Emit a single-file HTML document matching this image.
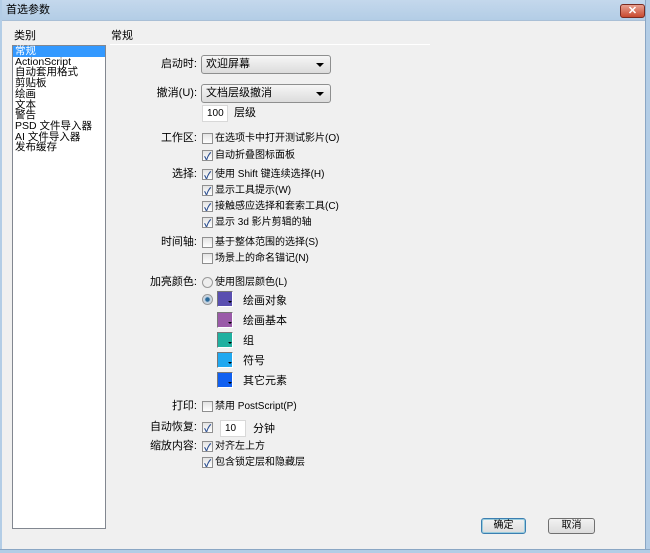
<!DOCTYPE html>
<html><head><meta charset="utf-8"><style>
*{margin:0;padding:0;box-sizing:border-box}
body{width:650px;height:553px;position:relative;overflow:hidden;background:#f0f0f0;font-family:"Liberation Sans","Noto Sans CJK SC",sans-serif;font-size:10px;color:#000}
.a{position:absolute;white-space:nowrap;line-height:13px}
.r{text-align:right;width:90px}
.title{position:absolute;left:0;top:0;width:650px;height:21px;background:linear-gradient(#c4d8ec,#b3cde6);border-bottom:1px solid #a9bfd6}
.rb{position:absolute;right:0;top:0;width:5px;height:553px;background:#b3cde6;border-left:1px solid #8aa6c4}
.bb{position:absolute;left:0;bottom:0;width:650px;height:4px;background:#b3cde6;border-top:1px solid #8aa6c4}
.lb{position:absolute;left:0;top:0;width:2px;height:553px;background:#b3cde6}
.close{position:absolute;left:620px;top:4px;width:25px;height:14px;border:1px solid #7a2b20;border-radius:3px;background:linear-gradient(#e8a090,#c84a30);color:#fff;font-size:11px;text-align:center;line-height:12px;font-weight:bold}
.list{position:absolute;left:12px;top:45px;width:94px;height:484px;background:#fff;border:1px solid #828790}
.list div{line-height:10.7px;padding-left:2px;font-size:10.5px}
.sel{background:#3399ff;color:#fff}
.dd{position:absolute;height:19px;border:1px solid #8e8f8f;border-radius:3px;background:linear-gradient(#f6f6f6,#dcdcdc);padding-left:4px;line-height:17px;font-size:11px}
.dd:after{content:"";position:absolute;right:6px;top:7px;border:4px solid transparent;border-top:4px solid #000;border-bottom:0}
.cb{position:absolute;width:11px;height:11px;border:1px solid #8f8f8f;background:linear-gradient(#e4e4e4,#fff)}
.cb.c:after{content:"✓";position:absolute;left:1px;top:-3px;font-size:10px;color:#2a4d8f;font-weight:bold}
.in{position:absolute;background:#fff;border:1px solid #d8d8d8;padding-left:4px;line-height:15px}
.sw{position:absolute;width:16px;height:16px;border:1px solid #777;border-right-color:#fff;border-bottom-color:#fff}
.sw:before{content:"";position:absolute;right:0;bottom:1px;border:2px solid transparent;border-top:2px solid #000;z-index:1}
.rad{position:absolute;width:11px;height:11px;border-radius:50%;border:1px solid #999;background:#eee}
.btn{position:absolute;height:16px;border:1px solid #707070;border-radius:3px;background:linear-gradient(#f2f2f2,#dcdcdc);text-align:center;line-height:14px}
</style></head><body>
<div class="title"></div>
<div class="a" style="left:6px;top:4px;font-size:11px">首选参数</div>
<div class="close">✕</div>
<div class="lb"></div><div class="rb"></div><div class="bb"></div>
<div class="a" style="left:14px;top:30px;font-size:11px">类别</div>
<div class="list"><div class="sel">常规</div><div>ActionScript</div><div>自动套用格式</div><div>剪贴板</div><div>绘画</div><div>文本</div><div>警告</div><div>PSD 文件导入器</div><div>AI 文件导入器</div><div>发布缓存</div></div>
<div class="a" style="left:111px;top:30px;font-size:11px">常规</div>
<div style="position:absolute;left:110px;top:44px;width:320px;height:1px;background:#a0a0a0;border-bottom:1px solid #fff"></div>
<div class="a r" style="left:107px;top:58px;font-size:11px">启动时:</div>
<div class="dd" style="left:201px;top:55px;width:130px">欢迎屏幕</div>
<div class="a r" style="left:107px;top:87px;font-size:11px">撤消(U):</div>
<div class="dd" style="left:201px;top:84px;width:130px">文档层级撤消</div>
<div class="in" style="left:202px;top:105px;width:26px;height:17px">100</div>
<div class="a" style="left:234px;top:107px;font-size:11px">层级</div>
<div class="a r" style="left:107px;top:132px;font-size:11px">工作区:</div>
<div class="cb" style="left:202px;top:133px"></div><div class="a" style="left:215px;top:132px">在选项卡中打开测试影片(O)</div>
<div class="cb c" style="left:202px;top:150px"></div><div class="a" style="left:215px;top:149px">自动折叠图标面板</div>
<div class="a r" style="left:107px;top:168px;font-size:11px">选择:</div>
<div class="cb c" style="left:202px;top:169px"></div><div class="a" style="left:215px;top:168px">使用 Shift 键连续选择(H)</div>
<div class="cb c" style="left:202px;top:185px"></div><div class="a" style="left:215px;top:184px">显示工具提示(W)</div>
<div class="cb c" style="left:202px;top:201px"></div><div class="a" style="left:215px;top:200px">接触感应选择和套索工具(C)</div>
<div class="cb c" style="left:202px;top:217px"></div><div class="a" style="left:215px;top:216px">显示 3d 影片剪辑的轴</div>
<div class="a r" style="left:107px;top:236px;font-size:11px">时间轴:</div>
<div class="cb" style="left:202px;top:237px"></div><div class="a" style="left:215px;top:236px">基于整体范围的选择(S)</div>
<div class="cb" style="left:202px;top:253px"></div><div class="a" style="left:215px;top:252px">场景上的命名锚记(N)</div>
<div class="a r" style="left:107px;top:276px;font-size:11px">加亮颜色:</div>
<div class="rad" style="left:202px;top:277px"></div><div class="a" style="left:215px;top:276px">使用图层颜色(L)</div>
<div class="rad" style="left:202px;top:294px;background:radial-gradient(#2a6a9a 30%,#bcd 40%,#eee)"></div>
<div class="sw" style="left:217px;top:291px;background:#5a4fb0"></div><div class="a" style="left:243px;top:295px;font-size:11px">绘画对象</div>
<div class="sw" style="left:217px;top:312px;background:#9a5aa8"></div><div class="a" style="left:243px;top:315px;font-size:11px">绘画基本</div>
<div class="sw" style="left:217px;top:332px;background:#20b0a0"></div><div class="a" style="left:243px;top:335px;font-size:11px">组</div>
<div class="sw" style="left:217px;top:352px;background:#20a8f0"></div><div class="a" style="left:243px;top:355px;font-size:11px">符号</div>
<div class="sw" style="left:217px;top:372px;background:#1060f0"></div><div class="a" style="left:243px;top:375px;font-size:11px">其它元素</div>
<div class="a r" style="left:107px;top:400px;font-size:11px">打印:</div>
<div class="cb" style="left:202px;top:401px"></div><div class="a" style="left:215px;top:400px">禁用 PostScript(P)</div>
<div class="a r" style="left:107px;top:421px;font-size:11px">自动恢复:</div>
<div class="cb c" style="left:202px;top:422px"></div>
<div class="in" style="left:220px;top:420px;width:26px;height:17px">10</div>
<div class="a" style="left:253px;top:423px;font-size:11px">分钟</div>
<div class="a r" style="left:107px;top:440px;font-size:11px">缩放内容:</div>
<div class="cb c" style="left:202px;top:441px"></div><div class="a" style="left:215px;top:440px">对齐左上方</div>
<div class="cb c" style="left:202px;top:457px"></div><div class="a" style="left:215px;top:456px">包含锁定层和隐藏层</div>
<div class="btn" style="left:481px;top:518px;width:45px;border-color:#3c7fb1;box-shadow:inset 0 0 0 1px #9cd">确定</div>
<div class="btn" style="left:548px;top:518px;width:47px">取消</div>
</body></html>
